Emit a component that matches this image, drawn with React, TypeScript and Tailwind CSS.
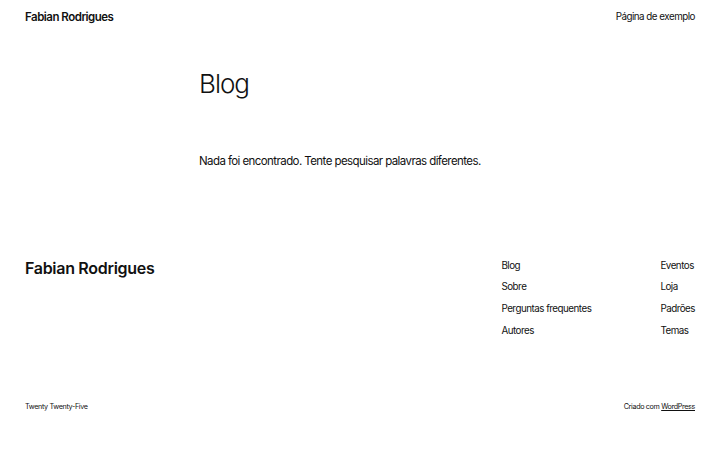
import React from 'react';

const font = { fontFamily: 'Inter, "Noto Sans", sans-serif' };

const linksLeft = ['Blog', 'Sobre', 'Perguntas frequentes', 'Autores'];
const linksRight = ['Eventos', 'Loja', 'Padrões', 'Temas'];

export default function App(): React.ReactElement {
  return (
    <div className="min-h-[450px] w-[720px] bg-white text-[#111111]" style={font}>
      {/* Header */}
      <header className="flex items-center justify-between px-[25px] pt-[9px]">
        <span className="text-[11.5px] font-semibold tracking-[-0.5px]">Fabian Rodrigues</span>
        <span className="text-[9.8px] tracking-[-0.5px]">Página de exemplo</span>
      </header>

      {/* Main */}
      <main className="mx-auto w-[322px] pt-[45px]">
        <h1 className="text-[26px] font-light leading-none tracking-[-1px]">Blog</h1>
        <p className="mt-[56px] text-[11.5px] tracking-[-0.58px]">
          Nada foi encontrado. Tente pesquisar palavras diferentes.
        </p>
      </main>

      {/* Footer */}
      <footer className="px-[25px] pt-[85px]">
        <div className="flex items-start justify-between">
          <span className="text-[16px] font-semibold tracking-[-0.3px]">Fabian Rodrigues</span>
          <div className="flex pt-[3px] text-[9.8px] tracking-[-0.5px]">
            <ul className="flex w-[159px] flex-col gap-[7px]">
              {linksLeft.map((l) => (
                <li key={l}>{l}</li>
              ))}
            </ul>
            <ul className="flex flex-col gap-[7px]">
              {linksRight.map((l) => (
                <li key={l}>{l}</li>
              ))}
            </ul>
          </div>
        </div>
        <div className="mt-[64px] flex items-center justify-between text-[7.2px] tracking-[-0.35px]">
          <span>Twenty Twenty-Five</span>
          <span>
            Criado com <span className="underline">WordPress</span>
          </span>
        </div>
      </footer>
    </div>
  );
}
